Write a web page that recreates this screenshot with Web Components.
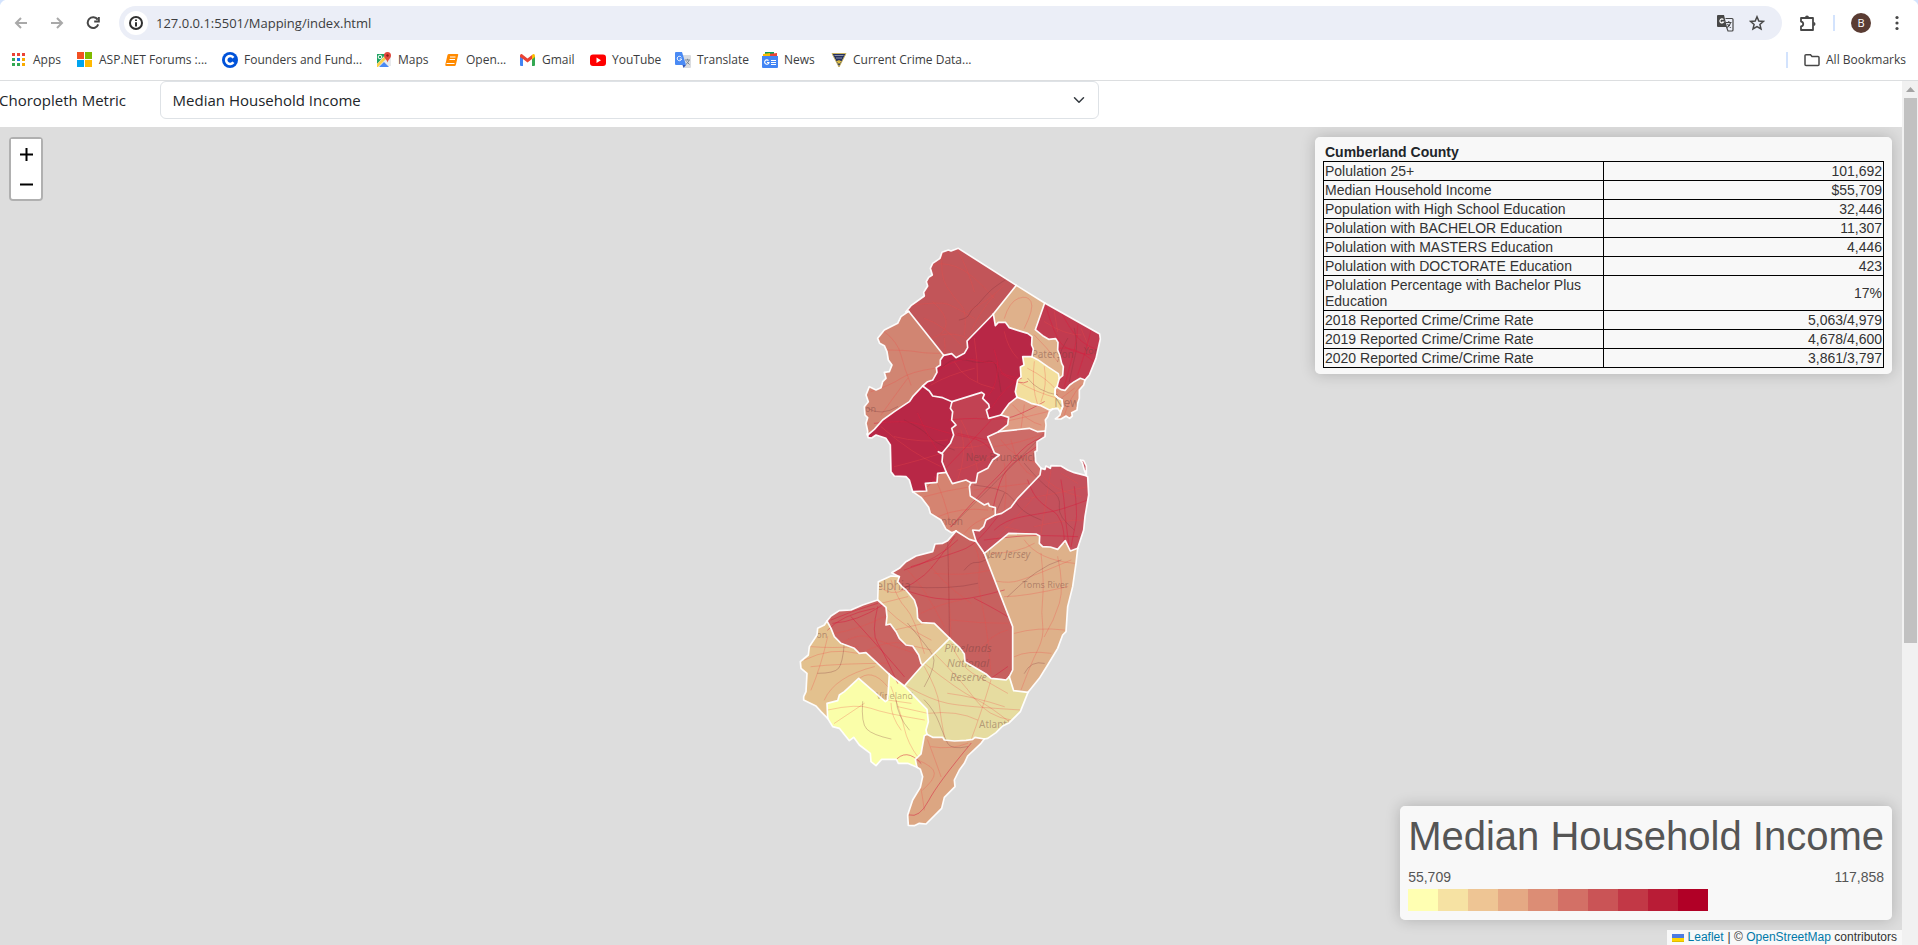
<!DOCTYPE html>
<html lang="en">
<head>
<meta charset="utf-8">
<title>Choropleth Map</title>
<style>
html, body { margin: 0; height: 100%; overflow: hidden; }
body { font-family: "Open Sans", "Noto Sans", sans-serif; color: #212529; background: #fff; }
</style>
</head>
<body>
<browser-window></browser-window>

<script>
const define = (name, html, setup) => customElements.define(name, class extends HTMLElement {
  constructor() {
    super();
    const t = document.createElement('template');
    t.innerHTML = html;
    this.attachShadow({ mode: 'open' }).appendChild(t.content.cloneNode(true));
  }
  connectedCallback() { if (setup) setup(this.shadowRoot, this); }
});

/* ---------- browser chrome ---------- */
define('nav-toolbar', `
<style>
:host { display: flex; align-items: center; height: 34px; padding: 6px 7px 0 7px; background: radial-gradient(circle at 8px 8px, #fff 8px, #d3e3fd 9px) 0 0 / 8px 8px no-repeat, radial-gradient(circle at 0 8px, #fff 8px, #d3e3fd 9px) 100% 0 / 8px 8px no-repeat, #fff; color: #474747; }
button { border: 0; background: none; padding: 0; width: 28px; height: 28px; display: grid; place-items: center; color: inherit; flex: none; }
.nav { display: flex; gap: 8px; margin-right: 12px; }
.off { color: #a9a9a9; }
.bar { flex: 1; display: flex; align-items: center; height: 34px; border-radius: 17px; background: #ebeef7; padding: 0 9px 0 5px; }
.info { width: 24px; height: 24px; border-radius: 50%; background: #fff; color: #303030; }
input { flex: 1; min-width: 0; border: 0; outline: 0; background: none; font: 13px/20px "Open Sans", sans-serif; color: #3c3d40; padding: 0 0 0 8px; }
.bar .act { width: 32px; }
.right { display: flex; align-items: center; margin-left: 12px; }
.sep { width: 2px; height: 16px; background: #d3e3fd; margin: 0 16px 0 11px; }
.avatar { width: 20px; height: 20px; border-radius: 50%; background: #5a3c33; color: #fff; font: 11px/20px "Open Sans", sans-serif; text-align: center; }
.menu { width: 28px; margin-left: 12px; }
svg { display: block; fill: none; stroke: currentColor; stroke-width: 2; }
</style>
<div class="nav">
  <button class="off" aria-label="Back"><svg width="14" height="14" viewBox="0 0 14 14"><path d="M13 7H2M7 2 2 7l5 5"/></svg></button>
  <button class="off" aria-label="Forward"><svg width="14" height="14" viewBox="0 0 14 14"><path d="M1 7h11M7 2l5 5-5 5"/></svg></button>
  <button aria-label="Reload"><svg width="14" height="14" viewBox="0 0 14 14"><path d="M11.6 3.6A5.4 5.4 0 1 0 12.2 8.4M12.8 1v4.6H8.2"/></svg></button>
</div>
<div class="bar">
  <button class="info" aria-label="Site information"><svg width="14" height="14" viewBox="0 0 14 14"><circle cx="7" cy="7" r="6"/><path d="M7 6.2v4.2M7 3.4v1.7"/></svg></button>
  <input aria-label="Address" value="127.0.0.1:5501/Mapping/index.html">
  <button class="act" aria-label="Translate page"><svg width="17" height="17" viewBox="0 0 17 17"><path d="M1 0h6l3 12H1a1 1 0 0 1-1-1V1a1 1 0 0 1 1-1z" fill="currentColor" stroke="none"/><path d="M6.4 4.6A2 2 0 1 0 6.6 7H4.8" stroke="#fff" stroke-width="1.2"/><path d="M8.5 3.5H15a1 1 0 0 1 1 1V15a1 1 0 0 1-1 1h-4l-1.5-4" stroke-width="1.2"/><path d="M9 7.5h5.5M11.8 6v1.5M13.5 7.8c-.5 2-2 3.8-3.5 4.8M10.5 9c.8 1.4 2 2.8 3.5 3.6" stroke-width="1.1"/></svg></button>
  <button class="act" aria-label="Bookmark this page"><svg width="16" height="16" viewBox="0 0 16 16"><path d="M8 1.8 9.8 6l4.6.4-3.5 3 1.1 4.5L8 11.500l-4 2.400 1.100-4.500-3.500-3L6.200 6z" stroke-width="1.5"/></svg></button>
</div>
<div class="right">
  <button aria-label="Extensions"><svg width="18" height="18" viewBox="0 0 18 18"><path d="M2 4h12v12H2v-3.6c3-.4 3-4.4 0-4.800z" stroke-width="1.8" stroke-linejoin="round"/><path d="M6 3.500a2 2 0 0 1 4 0zM14.500 8a2 2 0 0 1 0 4z" fill="currentColor" stroke="none"/></svg></button>
  <span class="sep"></span>
  <span class="avatar">B</span>
  <button class="menu" aria-label="Menu"><svg width="4" height="16" viewBox="0 0 4 16" style="fill:currentColor;stroke:none"><circle cx="2" cy="2.500" r="1.600"/><circle cx="2" cy="8" r="1.600"/><circle cx="2" cy="13.500" r="1.600"/></svg></button>
</div>`);

define('bookmark-link', `
<style>
:host { display: block; flex: none; }
a { display: flex; align-items: center; gap: 6px; color: #3c3d40; text-decoration: none; font: 12px/16px "Open Sans", sans-serif; white-space: nowrap; }
::slotted(svg) { width: 16px; height: 16px; display: block; flex: none; }
</style>
<a href="#"><slot name="icon"></slot><slot></slot></a>`);

define('bookmarks-bar', `
<style>
:host { display: flex; align-items: center; height: 40px; padding: 0 12px 0 11px; background: #fff; border-bottom: 1px solid #dcdee0; }
nav { display: flex; flex: 1; gap: 16px; min-width: 0; }
.sep { width: 2px; height: 16px; background: #d3e3fd; margin-right: 16px; }
</style>
<nav aria-label="Bookmarks">
<bookmark-link style="width:50px"><svg slot="icon" viewBox="0 0 16 16"><g fill="#ea4335"><path d="M1 1h3v3H1zM6 1h3v3H6zM11 1h3v3h-3z"/></g><path fill="#34a853" d="M1 6h3v3H1zM1 11h3v3H1z"/><path fill="#1a73e8" d="M6 6h3v3H6z"/><path fill="#f9ab00" d="M11 6h3v3h-3zM11 11h3v3h-3z"/><path fill="#34a853" d="M6 11h3v3H6z"/></svg>Apps</bookmark-link>
<bookmark-link style="width:129px"><svg slot="icon" viewBox="0 0 16 16"><path fill="#f25022" d="M0 0h7v7H0z"/><path fill="#7fba00" d="M8 0h7v7H8z"/><path fill="#00a4ef" d="M0 8h7v7H0z"/><path fill="#ffb900" d="M8 8h7v7H8z"/></svg>ASP.NET Forums :...</bookmark-link>
<bookmark-link style="width:138px"><svg slot="icon" viewBox="0 0 16 16"><circle cx="8" cy="8" r="8" fill="#0052d9"/><path d="M11.400 5.700a4 4 0 1 0 0 4.600" fill="none" stroke="#fff" stroke-width="2.600"/></svg>Founders and Fund...</bookmark-link>
<bookmark-link style="width:52px"><svg slot="icon" viewBox="0 0 16 16"><path fill="#1fa463" d="M1 2h9L1 12z"/><path fill="#e8eaed" d="M1 14 13 2l2 2v10z"/><path fill="#4a89f3" d="m3 15 5-5 5 5z"/><path fill="#fbd04b" d="m1 12 8-8 2 2-9 9H1z"/><circle cx="4" cy="5" r="1.800" fill="none" stroke="#fff"/><path fill="#e04a3f" d="M11.500 0A3.500 3.500 0 0 1 15 3.500C15 6 12.500 7 11.500 10.500 10.500 7 8 6 8 3.500A3.500 3.500 0 0 1 11.500 0z"/><circle cx="11.500" cy="3.500" r="1.200" fill="#8c1d14"/></svg>Maps</bookmark-link>
<bookmark-link style="width:60px"><svg slot="icon" viewBox="0 0 16 16"><path fill="#ff8a00" d="M5 2h8.500q1 0 .7 1l-2.400 10q-.3 1-1.300 1H2.500Q1 14 1.300 12.500L3.500 3q.3-1 1.500-1z"/><path d="M6 5h5.500M5.500 7.500H11M2.500 11.500h8" stroke="#fff" stroke-width="1.200"/></svg>Open...</bookmark-link>
<bookmark-link style="width:54px"><svg slot="icon" viewBox="0 0 16 16"><path fill="#4285f4" d="M0 4h3v10H1q-1 0-1-1z"/><path fill="#34a853" d="M12 4h3v9q0 1-1 1h-2z"/><path fill="#ea4335" d="M0 3.500Q1 1 3 3l4.500 3.500L12 3v4l-4.500 3.500L3 7 0 5z"/><path fill="#fbbc04" d="M12 3q2-2 3 .5V5l-3 2.500z"/></svg>Gmail</bookmark-link>
<bookmark-link style="width:69px"><svg slot="icon" viewBox="0 0 16 16"><rect y="2.500" width="16" height="11.500" rx="3" fill="#f00"/><path fill="#fff" d="m6.500 5.500 4.500 2.700-4.500 2.700z"/></svg>YouTube</bookmark-link>
<bookmark-link style="width:71px"><svg slot="icon" viewBox="0 0 16 16"><path fill="#dadce0" d="M6 3h9q1 0 1 1v11q0 1-1 1H9z"/><path fill="#4a8af4" d="M1 0h6l4 13H1q-1 0-1-1V1q0-1 1-1z"/><path fill="#3457b5" d="M7.500 13H11l-2.500 3z"/><path d="M6.300 5.300A2.200 2.200 0 1 0 6.600 7H4.700" fill="none" stroke="#fff"/><path d="M10 8h5M12.500 6.800V8M14 8.300q-.8 2.500-3 4M11.500 9.500l3 3" fill="none" stroke="#7a8591"/></svg>Translate</bookmark-link>
<bookmark-link style="width:53px"><svg slot="icon" viewBox="0 0 16 16"><path fill="#0f9d58" d="M3 0h9v4H3z"/><path fill="#ea4335" d="m7 2 8-1v4H7z"/><path fill="#fbbc04" d="m1 2 7-1v5H1z"/><path fill="#4285f4" d="M0 4h16v11q0 1-1 1H1q-1 0-1-1z"/><path d="M6.500 8.600A2.200 2.200 0 1 0 7 10.500H5M9 8.500h5M9 10.500h5M9 12.500h5" fill="none" stroke="#fff" stroke-width="1.200"/></svg>News</bookmark-link>
<bookmark-link><svg slot="icon" viewBox="0 0 16 16"><path fill="#25305f" stroke="#c9b463" d="M1 1.500h14L8 15z"/><path d="M3.500 3.500h9M5 6h6" stroke="#8b93a8" stroke-width="1"/><path d="M8 8v4M6 9l2 2 2-2" stroke="#e6c440" fill="none" stroke-width="1.300"/></svg>Current Crime Data...</bookmark-link>
</nav>
<span class="sep"></span>
<bookmark-link><svg slot="icon" viewBox="0 0 16 16"><path d="M1 3.500v9q0 1 1 1h12q1 0 1-1v-7q0-1-1-1H8L6.500 2.700H2q-1 0-1 .8z" fill="none" stroke="#474747" stroke-width="1.500"/></svg>All Bookmarks</bookmark-link>`);

define('page-scrollbar', `
<style>
:host { display: flex; flex-direction: column; background: #f1f1f1; }
svg { display: block; flex: none; margin: 0 auto; }
.thumb { flex: 545; margin: 0 1px 0 2px; background: #c1c1c1; }
.rest { flex: 302; }
</style>
<svg width="16" height="17" viewBox="0 0 16 17"><path d="M4 11h9L8.500 6z" fill="#a3a3a3"/></svg>
<div class="thumb"></div><div class="rest"></div>`);

/* ---------- page ---------- */
define('metric-picker', `
<style>
:host { display: grid; grid-template-columns: repeat(12, 1fr); gap: 24px; align-items: center; padding-bottom: 8px; font: 15px/24px "Open Sans", sans-serif; color: #212529; }
label { white-space: nowrap; }
.box { grid-column: span 6; display: grid; align-items: center; }
select { grid-area: 1/1; appearance: none; width: 100%; height: 38px; box-sizing: border-box; border: 1px solid #dee2e6; border-radius: 6px; background: #fff; padding: 0 36px 0 12px; font: inherit; color: inherit; }
svg { grid-area: 1/1; justify-self: end; margin-right: 12px; pointer-events: none; }
</style>
<label for="metric">Choropleth Metric</label>
<div class="box">
  <select id="metric"><option>Median Household Income</option></select>
  <svg width="16" height="12" viewBox="0 0 16 16"><path d="m2 5 6 6 6-6" fill="none" stroke="#343a40" stroke-width="2" stroke-linecap="round" stroke-linejoin="round"/></svg>
</div>`);

define('zoom-control', `
<style>
:host { display: flex; flex-direction: column; width: 30px; border: 2px solid rgba(0,0,0,.2); border-radius: 4px; background-clip: padding-box; }
button { width: 30px; height: 30px; box-sizing: border-box; border: 0; background: #fff; padding: 0; display: grid; place-items: center; }
button:first-child { border-bottom: 1px solid #ccc; border-radius: 2px 2px 0 0; }
button:last-child { border-radius: 0 0 2px 2px; }
</style>
<button aria-label="Zoom in"><svg width="13" height="13" viewBox="0 0 13 13"><path d="M0 6.500h13M6.500 0v13" stroke="#000" stroke-width="2"/></svg></button>
<button aria-label="Zoom out"><svg width="13" height="13" viewBox="0 0 13 13"><path d="M0 6.500h13" stroke="#000" stroke-width="2"/></svg></button>`);

define('info-panel', `
<style>
:host { display: block; box-sizing: border-box; padding: 6px 8px; border-radius: 5px; background: rgba(255,255,255,.8); box-shadow: 0 0 15px rgba(0,0,0,.2); font: 14px/16px "Liberation Sans", Arial, sans-serif; }
</style><slot></slot>`);

define('county-table', `
<style>
:host { display: block; }
table { width: 100%; table-layout: fixed; border-collapse: collapse; color: #333; }
caption { text-align: left; font-weight: bold; color: #212529; padding: 1px 2px; }
td, th { border: 1px solid #000; padding: 1px; font-weight: normal; text-align: left; }
td { text-align: right; }
</style>
<table><caption>Cumberland County</caption><tbody></tbody></table>`, root => {
  const rows = [
    ['Polulation 25+', '101,692'], ['Median Household Income', '$55,709'],
    ['Population with High School Education', '32,446'], ['Polulation with BACHELOR Education', '11,307'],
    ['Polulation with MASTERS Education', '4,446'], ['Polulation with DOCTORATE Education', '423'],
    ['Polulation Percentage with Bachelor Plus Education', '17%'],
    ['2018 Reported Crime/Crime Rate', '5,063/4,979'], ['2019 Reported Crime/Crime Rate', '4,678/4,600'],
    ['2020 Reported Crime/Crime Rate', '3,861/3,797']];
  root.querySelector('tbody').innerHTML = rows.map(([k, v]) => `<tr><th scope="row">${k}</th><td>${v}</td></tr>`).join('');
});

define('color-legend', `
<style>
:host { display: block; color: #555; }
h1 { margin: 0 0 8px; font-size: 40px; line-height: 48px; font-weight: normal; white-space: nowrap; }
.range { display: flex; justify-content: space-between; line-height: 18px; }
.ramp { display: flex; margin: 3px 0; height: 22px; width: 300px; }
.ramp i { flex: 1; }
</style>
<h1>Median Household Income</h1>
<div class="range"><span>55,709</span><span>117,858</span></div>
<div class="ramp"></div>`, root => {
  root.querySelector('.ramp').innerHTML = ['#ffffb2', '#f6e2a3', '#eec594', '#e5a984', '#dc8d75', '#d37066', '#ca5456', '#c23846', '#b91c36', '#b10026']
    .map(c => `<i style="background:${c}"></i>`).join('');
});

define('map-credits', `
<style>
:host { display: flex; align-items: center; gap: 4px; padding: 0 5px; height: 15px; background: rgba(255,255,255,.8); font: 12px/15px "Liberation Sans", Arial, sans-serif; color: #333; white-space: nowrap; }
a { color: #0078a8; text-decoration: none; }
svg { display: inline-block; vertical-align: -1px; }
</style>
<a href="#"><svg width="12" height="8" viewBox="0 0 12 8"><path fill="#4c7be1" d="M0 0h12v4H0z"/><path fill="#ffd500" d="M0 4h12v3H0z"/><path fill="#e0bc00" d="M0 7h12v1H0z"/></svg> Leaflet</a><span>| © <a href="#">OpenStreetMap</a> contributors</span>`);

/* County borders are kept as shared arcs, so neighbours meet exactly.
   Each arc is written in the grid of one map tile; the letter names the tile. */
const TILE = { A: [210, -15], B: [210, 540], C: [0, 840], D: [0, 1320] };
const pts = s => {
  let o = TILE.A; const out = [];
  for (const w of s.trim().split(/\s+/)) {
    if (TILE[w]) { o = TILE[w]; continue; }
    const [x, y] = w.split(',').map(Number);
    out.push([x + o[0], y + o[1]]);
  }
  return out;
};
const ARC = {
  susOut: 'A 143,229 134,231 150,212 190,183 188,172 200,153 196,140 203,127 214,120 208,100 215,85 237,70 243,52 262,45 270,48 292,40 466,151',
  susPas: 'A 466,151 397,237', susMor: 'A 397,237 318,318 320,338 310,355 285,368 272,356 248,361', susWar: 'A 248,361 143,229',
  pasOut: 'A 466,151 551,204', berOut: 'A 551,204 716,297 718,312 705,370 685,420 672,435',
  pasBer: 'A 551,204 523,284 545,302 563,313 584,311 591,322 590,345 596,360 602,385 607,395 605,422 595,430',
  essBer: 'A 595,430 592,440 588,456', berHud: 'A 588,456 600,464 612,466 626,450 640,440 658,430 672,435',
  pasMor: 'A 397,237 403,272 412,262 433,262 445,278 470,286 500,295 513,305 512,330 517,342 513,365',
  pasEss: 'A 513,365 530,374 560,395 592,416 595,430',
  essMor: 'A 513,365 485,365 489,390 478,396 480,425 470,435 463,470 468,487',
  essUni: 'A 468,487 490,495 510,505 540,512 565,525 575,522',
  essHud: 'A 588,456 583,460 582,480 590,488 603,495 605,515 598,532 590,520 575,522',
  hudOut: 'A 672,435 668,450 655,465 655,490 650,505 648,525 632,533 634,543 626,550 615,543 600,552 583,552 592,545 597,540 600,528 605,515 603,495 590,488 582,480 583,460 588,456',
  uniOut: 'A 575,522 565,530 560,545 553,555 555,570 B 553,33', uniMid: 'B 553,33 530,35 505,25 413,35',
  uniSom: 'B 413,35 440,14 443,-8 A 420,540', uniMor: 'A 420,540 430,525 445,505 468,487',
  morSom: 'A 420,540 383,550 376,525 385,518 383,508 365,490 370,478 362,472 273,500',
  morHun: 'A 273,500 245,488 215,483 205,468 185,453', morWar: 'A 185,453 200,440 215,435 228,412 226,398 238,390 238,375 248,361',
  warHun: 'A 185,453 155,485 145,500 100,530 65,555 40,583 20,600',
  warOut: 'A 143,229 120,245 110,265 70,285 50,310 56,325 70,332 78,350 82,375 93,390 85,410 70,412 75,430 65,440 60,458 45,465 25,455 15,480 22,500 10,515 12,540 20,548 15,565 20,588 20,600',
  hunOut: 'A 20,600 B 18,42 22,53 32,54 45,45 75,55 88,75 90,155 100,168 135,170 145,180 155,215',
  hunMer: 'B 155,215 197,213 193,190 228,187 230,160 256,157',
  hunSom: 'B 256,157 243,125 245,103 232,95 243,100 268,70 278,45 272,25 285,15 272,0 275,-25 268,-35 A 273,500',
  somMer: 'B 256,157 274,191 315,180 330,188', somMid: 'B 330,188 345,188 350,160 380,145 395,120 415,105 400,98 380,50 413,35',
  merMid: 'B 330,188 325,200 328,228 370,255 382,250 385,258 403,263 403,285',
  merMon: 'B 403,285 375,300 368,320 355,332 335,330 345,364', merBur: 'B 345,364 325,358 285,333',
  merOut: 'B 155,215 180,232 203,262 208,280 240,300 255,328 272,338 285,333',
  midMon: 'B 403,285 422,280 450,262 470,235 537,165 540,145',
  midOut: 'B 553,33 552,50 528,65 528,92 522,95 524,125 540,145',
  monOut: 'B 540,145 552,148 555,138 568,145 570,137 600,138 620,150 640,158 672,166 680,170 683,225 672,290 668,330 650,385',
  monOce: 'B 650,385 628,393 613,362 590,388 568,381 545,380 535,370 536,348 525,342 443,340 370,400',
  monBur: 'B 370,400 345,364', hook: 'B 658,120 668,122 676,138 676,166 670,150 664,128 658,120',
  oceBur: 'B 370,400 C 665,320 665,450 655,470', oceAtl: 'C 655,470 668,512 711,517',
  oceOut: 'B 650,385 C 855,130 845,200 830,260 825,335 815,345 800,385 770,435 745,475 711,517',
  burAtl: 'C 655,470 645,480 630,478 600,475 585,462 548,440 522,425 520,402 505,382 476,355',
  burOut: 'B 285,333 C 485,45 470,62 455,70 432,72 425,95 375,108 345,125 325,145 302,158 325,170',
  burCam: 'C 325,170 320,185 333,200 345,210 370,240 378,265 380,295 392,308 430,310 476,355',
  camOut: 'C 325,170 300,168 262,185 260,240',
  camGlo: 'C 260,240 285,262 288,290 285,315 298,312 315,335 325,355 345,375 365,378 383,405 390,430 395,435',
  camAtl: 'C 476,355 395,435', gloAtl: 'C 395,435 340,498', gloOut: 'C 260,240 215,255 180,270 145,272 120,288 108,303',
  gloSal: 'C 108,303 120,325 130,350 150,370 190,385 205,400 225,398 295,463', gloCum: 'C 295,463 340,498',
  salCum: 'C 295,463 290,540 283,545 203,475 160,515 145,525 D 140,62 108,70 110,115',
  salOut: 'C 108,303 100,315 80,325 78,345 55,380 52,405 28,425 30,445 48,460 45,515 38,530 D 38,60 75,78 90,95 110,115',
  cumOut: 'D 110,115 125,140 145,145 175,182 188,172 205,195 238,220 240,245 255,257 272,238 316,238 322,250 350,250 378,262',
  cumCap: 'D 378,262 373,238 390,222 400,167 408,163', cumAtl: 'C 340,498 D 408,88 412,125 405,150 408,163',
  capAtl: 'D 408,163 425,172 455,172 460,180 490,183 525,181 545,178 552,172 580,177',
  atlOut: 'C 711,517 D 688,95 655,128 635,138 615,158 590,175 580,177',
  capOut: 'D 580,177 570,190 530,228 520,250 505,270 490,300 492,320 460,352 452,385 405,432 385,430 370,437 352,436 350,405 365,360 388,322 395,290 388,268 378,262'
};
const COUNTY = [
  ['#c25559', 'susOut susPas susMor susWar'], ['#d18572', 'susWar- morWar warHun warOut'],
  ['#dfb18b', 'pasOut pasBer pasEss pasMor susPas'], ['#c13b50', 'berOut berHud essBer pasBer'],
  ['#b82746', 'susMor morWar morHun morSom uniMor essMor pasMor'],
  ['#f3df9d', 'pasEss essBer essHud essUni essMor'], ['#da937a', 'berHud hudOut'],
  ['#de9c83', 'essUni uniOut uniMid uniSom uniMor'], ['#b82746', 'warHun hunOut hunMer hunSom morHun'],
  ['#c24253', 'morSom hunSom somMer somMid uniSom'], ['#cd6c68', 'uniMid somMid merMid midMon midOut'],
  ['#d58471', 'hunMer somMer merMid merMon merBur merOut'], ['#c4515c', 'midMon- monOut- monOce monBur merMon'],
  ['#c4515c', 'hook'], ['#deb18a', 'monOce oceBur oceAtl oceOut'],
  ['#c7615f', 'burOut burCam burAtl oceBur monBur merBur'],
  ['#e4c594', 'camOut camGlo camAtl burCam'], ['#c96361', 'gloOut- gloSal gloCum gloAtl camGlo'],
  ['#e3c18e', 'gloSal salCum salOut'], ['#fafea9', 'gloCum cumAtl cumCap cumOut salCum'],
  ['#e6dca0', 'camAtl gloAtl cumAtl capAtl atlOut oceAtl burAtl'], ['#dca682', 'capAtl capOut cumCap']
];
const ROADS = {
  major: [
    'A 240,400 300,365 370,382 410,382 420,415 450,425 480,430', 'A 240,400 210,440 120,520 30,590', 'A 410,382 412,450 380,485',
    'A 400,345 410,382', 'A 420,415 480,455 500,440', 'A 480,430 440,445 390,520', 'A 265,555 330,548 400,555 470,545 550,500',
    'A 555,215 580,300 620,350 690,360', 'A 650,270 650,310 630,380 610,455', 'A 690,285 680,330 650,420', 'A 600,230 625,280 670,330 700,340',
    'A 590,340 640,330 700,380', 'B 40,10 130,0 200,20 280,45 370,60 400,100', 'B 170,-20 200,50 235,100', 'B 200,200 280,120 400,-10',
    'B 270,320 340,240 430,150 480,90 520,60 550,50', 'B 290,40 330,50 380,60', 'B 370,360 450,350 540,345 650,350', 'B 400,330 430,300 540,280 600,270 680,240',
    'B 500,180 515,225 560,265 590,280 610,330 610,370', 'B 600,180 610,240 612,290 625,385', 'B 640,200 650,280 640,330 630,380', 'B 540,70 500,100 440,140 410,200 395,270',
    'B 410,290 350,370 280,400 150,440', 'C 490,50 430,140 370,190 330,210', 'C 500,60 440,120 340,150', 'C 340,210 400,230 470,240 550,235 640,210', 'C 550,235 610,265 650,290',
    'C 110,330 150,285 250,265', 'C 125,310 200,305 275,255', 'C 120,300 190,270 260,250', 'C 260,260 240,340 280,400 320,490', 'C 180,290 290,410 340,470', 'C 650,440 600,475',
    'D 355,405 385,415 440,310 540,190', 'D 310,245 345,200 390,250'
  ],
  minor: [
    'A 215,90 240,80 330,110 400,190', 'A 245,50 235,120 280,190 320,230 310,300', 'A 150,210 240,200 280,215 340,250', 'A 290,45 320,100 340,170', 'A 190,250 250,270 300,330', 'A 215,200 260,240 250,300 210,310',
    'A 240,300 280,290 320,310', 'A 250,310 255,340 250,360', 'A 320,230 380,200 430,150',
    'A 400,180 350,240 330,290', 'A 55,345 140,345 190,355 240,355', 'A 70,290 110,320 130,400 150,450', 'A 30,470 90,450 150,410 220,400', 'A 60,540 110,470 140,430', 'A 430,250 445,200 500,180 520,220 490,280',
    'A 340,310 350,370 350,440', 'A 280,380 310,440 400,460', 'A 210,450 260,420 340,400', 'A 430,290 440,340 470,370', 'A 520,300 560,340 590,380', 'A 500,400 560,430 590,470', 'A 470,440 520,470 590,490', 'A 520,380 510,450 530,510', 'A 550,395 560,450 540,500',
    'A 430,560 500,545 560,530', 'A 455,510 500,560 540,570', 'A 490,510 480,580', 'A 580,230 590,290', 'A 550,260 610,300 660,300', 'A 660,280 690,350', 'A 600,490 640,460', 'A 610,540 625,490 660,450',
    'B 100,50 180,70 260,60', 'B 60,20 150,100 240,140', 'B 100,140 180,120 240,100', 'B 300,30 320,100 290,180', 'B 260,80 330,90 380,70', 'B 290,150 340,140 400,100', 'B 300,0 330,50 350,150',
    'B 190,230 260,210 330,200', 'B 220,170 250,230 270,320', 'B 230,290 300,260 380,270', 'B 310,340 340,300 390,290', 'B 420,60 460,120 540,130', 'B 400,80 480,70 550,40', 'B 340,210 420,200 500,190', 'B 430,270 440,200 430,130', 'B 450,60 470,150 520,170',
    'B 470,240 540,230 680,200', 'B 380,380 470,290 520,230', 'B 430,320 480,330 520,345', 'B 540,160 570,210 660,230', 'B 570,150 560,210 540,340', 'B 520,320 600,300 670,300', 'B 600,160 650,190',
    'C 480,60 470,150 475,250 480,350', 'C 400,110 440,180 540,250', 'C 350,150 400,200 460,320', 'C 540,60 570,100 560,200 590,330 600,460', 'C 390,280 450,250 510,240', 'C 480,300 560,310 650,310', 'C 430,160 520,170 600,150', 'C 560,400 600,340 650,330',
    'C 600,180 640,190 700,180 840,120', 'C 700,60 740,120 850,130', 'C 750,100 760,190 750,280 760,350 720,430 690,510', 'C 800,110 820,200 790,300 760,350', 'C 670,340 740,320 820,330', 'C 640,230 700,230 830,200', 'C 600,100 680,100 730,70', 'C 670,410 710,390 780,400',
    'C 265,200 300,230 340,210', 'C 270,250 350,230', 'C 300,180 320,240 370,290 400,400', 'C 290,270 340,320 420,360', 'C 310,330 400,310', 'C 330,370 420,390', 'C 130,340 200,330 280,290', 'C 150,370 200,340 260,360 370,400', 'C 230,390 290,360 340,370',
    'C 40,420 120,380 200,400', 'C 60,380 120,385 200,380', 'C 60,510 90,440 110,350', 'C 60,440 150,430 290,430', 'C 100,540 130,470 250,440', 'C 200,480 240,440 290,500',
    'D 110,90 200,70 280,100 400,120', 'D 300,20 330,100 350,190 380,230', 'D 300,70 300,110 330,150', 'D 130,130 220,70', 'D 320,80 410,100', 'D 290,60 360,70',
    'C 400,430 500,510 600,560 660,610', 'C 430,400 510,480 590,590 660,600', 'C 350,500 420,540 520,560 690,570', 'C 540,660 570,580 600,480', 'C 480,370 510,440 580,480 650,520', 'C 400,440 440,510 450,600 460,650', 'C 410,580 500,570 560,600', 'C 470,520 550,530 640,560',
    'D 380,240 430,260 430,300 395,330', 'D 410,180 440,260 450,290', 'D 385,300 395,350 400,390', 'D 420,200 480,210 530,190'
  ],
  rail: [
    'A 440,130 400,155 370,185 350,210 330,225 320,250 295,255', 'A 240,400 270,370 320,375 350,385 395,375 410,400 420,470', 'A 590,380 600,340 620,310', 'A 640,280 650,330 640,370 625,440', 'A 500,430 530,470 590,480',
    'A 20,520 60,545 110,515', 'B 270,320 330,260 430,160 550,40', 'B 130,0 190,30 220,70 280,90', 'B 340,195 420,205 460,240 490,280 540,300', 'B 490,130 540,190 600,230 590,290 640,330', 'B 430,220 400,290',
    'C 470,60 475,240 475,350', 'C 340,200 480,210 560,190', 'C 520,150 540,125 570,130 600,110', 'C 810,120 740,140 650,230', 'C 160,370 155,430 130,460 80,460',
    'C 350,310 410,380 440,430 400,500', 'D 215,65 210,130 245,165 300,177', 'D 315,60 320,110 355,150', 'C 760,430 720,420 700,460', 'D 400,60 430,90 460,170 480,210 530,200'
  ]
};
const LABELS = [
  ['A', 512, 368, 30, 'Paterson'], ['A', 668, 357, 27, 'Yor'], ['A', 580, 516, 36, 'New'], ['A', 12, 530, 27, 'on'],
  ['B', 314, 123, 30, 'New Brunswick'], ['B', 240, 314, 30, 'nton'], ['B', 366, 413, 30, 'New Jersey', 'italic'],
  ['C', 256, 209, 36, 'elphia'], ['C', 694, 203, 27, 'Toms River'], ['C', 76, 354, 27, 'on'],
  ['C', 460, 397, 33, 'Pinelands', 'italic'], ['C', 468, 440, 33, 'National', 'italic'], ['C', 477, 482, 33, 'Reserve', 'italic'],
  ['D', 256, 56, 27, 'Vineland'], ['D', 564, 143, 30, 'Atlantic']
];

define('county-map', `
<style>
:host { display: block; }
svg { display: block; font-family: "Noto Sans", "Open Sans", sans-serif; }
.line path { fill: none; stroke-linejoin: round; stroke-linecap: round; }
.major { stroke: #d81f40; stroke-opacity: .5; stroke-width: 3; }
.minor { stroke: #f04a48; stroke-opacity: .42; stroke-width: 2; }
.rail { stroke: #7a3038; stroke-opacity: .28; stroke-width: 3; }
.edge { stroke: #fff; stroke-opacity: .95; stroke-width: 5; }
text { fill: #6e3f3c; fill-opacity: .42; }
</style>
<svg width="320" height="592" viewBox="0 0 960 1776" role="img" aria-label="New Jersey counties by median household income"></svg>`, root => {
  const poly = list => list.split(' ').reduce((acc, id) => {
    let p = pts(ARC[id.replace('-', '')]);
    if (acc.length) {
      const dist = (a, b) => Math.hypot(a[0] - b[0], a[1] - b[1]);
      const end = acc[acc.length - 1];
      if (dist(end, p[p.length - 1]) < dist(end, p[0])) p = p.reverse();
    } else if (id.endsWith('-')) {
      p = p.reverse();
    }
    return acc.concat(p);
  }, []);
  /* Order the arcs into a ring by walking from one free end to the next. */
  const ring = list => {
    const ids = list.replace(/-/g, '').split(' ');
    const left = ids.map(i => pts(ARC[i]));
    const dist = (a, b) => Math.hypot(a[0] - b[0], a[1] - b[1]);
    let out = left.shift();
    while (left.length) {
      const end = out[out.length - 1];
      let best = 0, flip = false, min = Infinity;
      left.forEach((p, i) => {
        if (dist(end, p[0]) < min) { min = dist(end, p[0]); best = i; flip = false; }
        if (dist(end, p[p.length - 1]) < min) { min = dist(end, p[p.length - 1]); best = i; flip = true; }
      });
      const p = left.splice(best, 1)[0];
      out = out.concat(flip ? p.reverse() : p);
    }
    return out;
  };
  const d = p => 'M' + p.map(q => q.join(' ')).join('L');
  const curve = s => {
    const p = pts(s);
    if (p.length === 2) return d(p);
    let out = `M${p[0]}`;
    for (let i = 1; i < p.length - 1; i++) {
      const m = i === p.length - 2 ? p[i + 1] : [(p[i][0] + p[i + 1][0]) / 2, (p[i][1] + p[i + 1][1]) / 2];
      out += `Q${p[i]} ${m}`;
    }
    return out;
  };
  const shapes = COUNTY.map(([c, a]) => [c, d(ring(a)) + 'Z']);
  const lines = k => ROADS[k].map(s => `<path class="${k}" d="${curve(s)}"/>`).join('');
  root.querySelector('svg').innerHTML =
    `<defs><clipPath id="state">${shapes.map(s => `<path d="${s[1]}"/>`).join('')}</clipPath></defs>` +
    shapes.map(s => `<path fill="${s[0]}" d="${s[1]}"/>`).join('') +
    `<g class="line" clip-path="url(#state)">${lines('minor')}${lines('rail')}${lines('major')}</g>` +
    `<g clip-path="url(#state)">${LABELS.map(([t, x, y, s, w, st]) =>
      `<text x="${x + TILE[t][0]}" y="${y + TILE[t][1]}" font-size="${s}" font-style="${st || 'normal'}">${w}</text>`).join('')}</g>` +
    `<g class="line">${Object.values(ARC).map(a => `<path class="edge" d="${d(pts(a))}"/>`).join('')}</g>`;
});

define('leaflet-map', `
<style>
:host { display: grid; grid-template: 1fr / 1fr; background: #ddd; overflow: hidden; min-height: 0; }
:host > * { grid-area: 1/1; }
county-map { place-self: center; }
zoom-control { place-self: start; margin: 10px; }
.stats { place-self: start end; width: 577px; margin: 10px; }
.corner { place-self: end; display: flex; flex-direction: column; align-items: flex-end; gap: 10px; }
.corner info-panel { margin-right: 10px; }
</style>
<county-map></county-map>
<zoom-control></zoom-control>
<info-panel class="stats"><county-table></county-table></info-panel>
<div class="corner">
  <info-panel><color-legend></color-legend></info-panel>
  <map-credits></map-credits>
</div>`);

define('browser-window', `
<style>
:host { display: grid; grid-template-rows: auto auto 1fr; height: 100vh; background: #fff; overflow: hidden; }
.view { display: grid; grid-template-columns: 1fr 16px; min-height: 0; margin-left: -1px; }
main { display: grid; grid-template-rows: auto 1fr; min-width: 0; min-height: 0; }
</style>
<nav-toolbar></nav-toolbar>
<bookmarks-bar></bookmarks-bar>
<div class="view">
  <main><metric-picker></metric-picker><leaflet-map></leaflet-map></main>
  <page-scrollbar></page-scrollbar>
</div>`);
</script>
</body>
</html>
